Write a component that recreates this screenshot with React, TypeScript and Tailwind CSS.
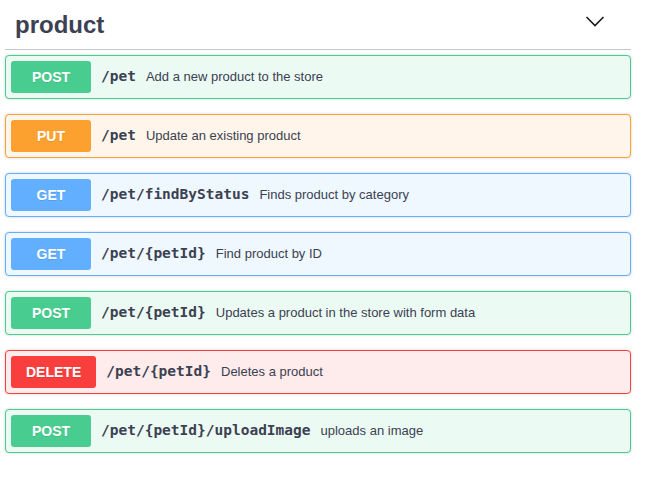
import React from "react";

type Op = { method: string; path: string; desc: string };

const ops: Op[] = [
  { method: "POST", path: "/pet", desc: "Add a new product to the store" },
  { method: "PUT", path: "/pet", desc: "Update an existing product" },
  { method: "GET", path: "/pet/findByStatus", desc: "Finds product by category" },
  { method: "GET", path: "/pet/{petId}", desc: "Find product by ID" },
  { method: "POST", path: "/pet/{petId}", desc: "Updates a product in the store with form data" },
  { method: "DELETE", path: "/pet/{petId}", desc: "Deletes a product" },
  { method: "POST", path: "/pet/{petId}/uploadImage", desc: "uploads an image" },
];

const styles: Record<string, { block: string; badge: string }> = {
  POST: { block: "border-[#49cc90] bg-[#ecfaf4]", badge: "bg-[#49cc90]" },
  PUT: { block: "border-[#fca130] bg-[#fff5ea]", badge: "bg-[#fca130]" },
  GET: { block: "border-[#61affe] bg-[#eff7ff]", badge: "bg-[#61affe]" },
  DELETE: { block: "border-[#f93e3e] bg-[#feebeb]", badge: "bg-[#f93e3e]" },
};

export default function App() {
  return (
    <div className="w-[646px] h-[489px] bg-white" style={{ fontFamily: '"Liberation Sans", Arial, sans-serif' }}>
      <div className="ml-[5px] w-[626px]">
        <div className="h-[50px] flex items-start justify-between border-b border-[#c4c6ca] pl-[10px] pr-[26px] pt-[7px]">
          <h3 className="text-[24px] font-bold leading-normal text-[#3b4151]">product</h3>
          <svg width="20" height="20" viewBox="0 0 20 20" className="mt-[4px]">
            <path d="M1.5 6 L10 14.5 L18.5 6" fill="none" stroke="#1b1b1b" strokeWidth="1.6" />
          </svg>
        </div>
        <div className="pt-[5px] flex flex-col gap-[15px]">
          {ops.map((op, i) => {
            const s = styles[op.method];
            return (
              <div
                key={i}
                className={`h-[44px] flex items-center border rounded-[4px] p-[5px] shadow-[0_0_3px_rgba(0,0,0,0.19)] ${s.block}`}
              >
                <span
                  className={`h-[32px] min-w-[80px] px-[15px] flex items-center justify-center rounded-[3px] text-white text-[14px] font-bold ${s.badge}`}
                  style={{ textShadow: "0 1px 0 rgba(0,0,0,0.1)" }}
                >
                  {op.method}
                </span>
                <span
                  className="px-[10px] text-[14.5px] font-bold text-[#3b4151]"
                  style={{ fontFamily: '"DejaVu Sans Mono", monospace' }}
                >
                  {op.path}
                </span>
                <span className="text-[13px] text-[#3b4151]">{op.desc}</span>
              </div>
            );
          })}
        </div>
      </div>
    </div>
  );
}
